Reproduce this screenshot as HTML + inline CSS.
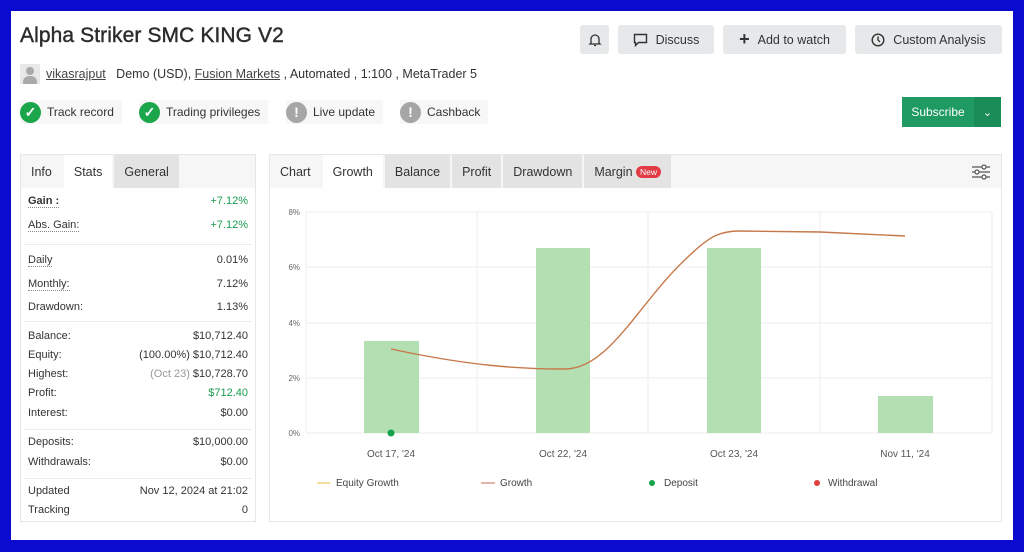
<!DOCTYPE html>
<html><head><meta charset="utf-8"><style>
*{box-sizing:border-box;margin:0;padding:0}
body{width:1024px;height:552px;background:#0b0bd0;font-family:"Liberation Sans",Arial,sans-serif;color:#333;position:relative;overflow:hidden}
.page{position:absolute;left:11px;top:11px;width:1002px;height:529px;background:#fff}
.abs{position:absolute}
h1{position:absolute;left:9px;top:13px;font-size:21px;font-weight:normal;color:#2b2b2b;-webkit-text-stroke:0.4px #2b2b2b;letter-spacing:0.1px;white-space:nowrap}
.meta{position:absolute;left:9px;top:53px;font-size:12.5px;color:#333;display:flex;align-items:center;white-space:nowrap}
.meta u{color:#444}
.av{width:20px;height:20px;background:#e8e8e8;margin-right:6px;position:relative;overflow:hidden}
.badge{position:absolute;top:89px;height:24px;background:#f7f7f7;display:flex;align-items:center;font-size:12px;color:#333;padding-right:8px;white-space:nowrap}
.ic{width:21px;height:21px;border-radius:50%;display:flex;align-items:center;justify-content:center;margin-right:6px;color:#fff;font-weight:bold;font-size:14px;flex:none}
.btn{position:absolute;top:14px;height:29px;background:#e6e8ea;border-radius:3px;display:flex;align-items:center;justify-content:center;font-size:12.5px;color:#333;white-space:nowrap}
.sub{position:absolute;left:891px;top:86px;width:99px;height:30px;background:#1f9a62;color:#fff;font-size:12px;display:flex;align-items:center}
.panel{position:absolute;top:143px;height:368px;border:1px solid #e6e6e6;background:#fff}
.tabs{height:33px;background:#f6f6f6;display:flex;font-size:12.5px;color:#333;white-space:nowrap}
.tabs div{padding:0 10px;display:flex;align-items:center;margin-right:2px}
.tabs .w{background:#fff}.tabs .g{background:#e3e3e3}
.row{position:absolute;left:0;right:0;display:flex;justify-content:space-between;font-size:11px;color:#333;padding:0 7px;height:16px;align-items:center;white-space:nowrap}
.sep{position:absolute;left:3px;right:3px;border-top:1px solid #ececec}
.dot{border-bottom:1px dotted #888}
.gr{color:#1a9c4e}
</style></head><body><div class="page">
<h1>Alpha Striker SMC KING V2</h1>
<div class="meta"><div class="av"><div class="abs" style="left:6px;top:3px;width:8px;height:8px;border-radius:50%;background:#aaa"></div><div class="abs" style="left:3px;top:12px;width:14px;height:10px;border-radius:6px 6px 0 0;background:#aaa"></div></div><u>vikasrajput</u>&nbsp;&nbsp; Demo (USD),&nbsp;<u>Fusion Markets</u>&nbsp;, Automated , 1:100 , MetaTrader 5</div>
<div class="badge" style="left:9px"><div class="ic" style="background:#1ca64c">✓</div>Track record</div>
<div class="badge" style="left:128px"><div class="ic" style="background:#1ca64c">✓</div>Trading privileges</div>
<div class="badge" style="left:275px"><div class="ic" style="background:#a6a6a6">!</div>Live update</div>
<div class="badge" style="left:389px"><div class="ic" style="background:#a6a6a6">!</div>Cashback</div>
<div class="btn" style="left:569px;width:29px"><svg width="14" height="14" viewBox="0 0 14 14" fill="none" stroke="#333" stroke-width="1.3"><path d="M3 10V6a4 4 0 018 0v4l1 1H2z M6 12.5h2"/></svg></div>
<div class="btn" style="left:607px;width:96px"><svg width="15" height="14" viewBox="0 0 15 14" fill="none" stroke="#333" stroke-width="1.4" style="margin-right:8px"><path d="M1.5 1.5h12v8h-8l-3 3v-3h-1z"/></svg>Discuss</div>
<div class="btn" style="left:712px;width:123px"><span style="font-size:18px;margin-right:8px;font-weight:bold">+</span>Add to watch</div>
<div class="btn" style="left:844px;width:147px"><svg width="14" height="14" viewBox="0 0 14 14" fill="none" stroke="#333" stroke-width="1.4" style="margin-right:8px"><circle cx="7" cy="7" r="5.8"/><path d="M7 3.5V7l2 2"/></svg>Custom Analysis</div>
<div class="sub"><span style="width:72px;text-align:center">Subscribe</span><span style="width:27px;height:30px;background:#1a8c58;display:flex;align-items:center;justify-content:center;font-size:11px">&#8964;</span></div>

<div class="panel" style="left:9px;width:236px">
<div class="tabs"><div>Info</div><div class="w">Stats</div><div class="g">General</div></div>
<div class="row" style="top:38px"><b class="dot">Gain :</b><span class="gr">+7.12%</span></div>
<div class="row" style="top:62px"><span class="dot">Abs. Gain:</span><span class="gr">+7.12%</span></div>
<div class="sep" style="top:89px"></div>
<div class="row" style="top:97px"><span class="dot">Daily</span><span>0.01%</span></div>
<div class="row" style="top:121px"><span class="dot">Monthly:</span><span>7.12%</span></div>
<div class="row" style="top:144px"><span>Drawdown:</span><span>1.13%</span></div>
<div class="sep" style="top:166px"></div>
<div class="row" style="top:173px"><span>Balance:</span><span>$10,712.40</span></div>
<div class="row" style="top:192px"><span>Equity:</span><span>(100.00%) $10,712.40</span></div>
<div class="row" style="top:211px"><span>Highest:</span><span><span style="color:#999">(Oct 23)</span> $10,728.70</span></div>
<div class="row" style="top:230px"><span>Profit:</span><span class="gr">$712.40</span></div>
<div class="row" style="top:250px"><span>Interest:</span><span>$0.00</span></div>
<div class="sep" style="top:274px"></div>
<div class="row" style="top:279px"><span>Deposits:</span><span>$10,000.00</span></div>
<div class="row" style="top:299px"><span>Withdrawals:</span><span>$0.00</span></div>
<div class="sep" style="top:323px"></div>
<div class="row" style="top:328px"><span>Updated</span><span>Nov 12, 2024 at 21:02</span></div>
<div class="row" style="top:347px"><span>Tracking</span><span>0</span></div>
</div>

<div class="panel" style="left:258px;width:733px">
<div class="tabs"><div>Chart</div><div class="w">Growth</div><div class="g">Balance</div><div class="g">Profit</div><div class="g">Drawdown</div><div class="g">Margin&nbsp;<span style="background:#e23b46;color:#fff;font-size:8.5px;border-radius:6px;padding:1px 4px">New</span></div></div>
<svg class="abs" style="right:10px;top:8px" width="20" height="18" viewBox="0 0 20 18" fill="none" stroke="#555" stroke-width="1.2"><path d="M1 4h18M1 9h18M1 14h18"/><circle cx="13" cy="4" r="2" fill="#fff"/><circle cx="6" cy="9" r="2" fill="#fff"/><circle cx="13" cy="14" r="2" fill="#fff"/></svg>
</div>
<svg class="abs" style="left:0;top:0" width="1002" height="529" viewBox="11 11 1002 529" font-family="Liberation Sans,Arial,sans-serif">
<g stroke="#ececec" stroke-width="1">
<path d="M306 212H992M306 267H992M306 323H992M306 378H992M306 433H992M306 212V433M477 212V433M648 212V433M820 212V433M992 212V433"/>
</g>
<g fill="#b3dfb3"><rect x="364" y="341" width="55" height="92"/><rect x="536" y="248" width="54" height="185"/><rect x="707" y="248" width="54" height="185"/><rect x="878" y="396" width="55" height="37"/></g>
<path d="M391 349C470 366 520 369 565 369C610 369 640 300 690 255C710 236 720 231 740 231L820 232L905 236" fill="none" stroke="#c7784a" stroke-width="1.4"/>
<circle cx="391" cy="433" r="3.5" fill="#12a34a"/>
<g font-size="8" fill="#666" text-anchor="end"><text x="300" y="215">8%</text><text x="300" y="270">6%</text><text x="300" y="326">4%</text><text x="300" y="381">2%</text><text x="300" y="436">0%</text></g>
<g font-size="10" fill="#555" text-anchor="middle"><text x="391" y="457">Oct 17, '24</text><text x="563" y="457">Oct 22, '24</text><text x="734" y="457">Oct 23, '24</text><text x="905" y="457">Nov 11, '24</text></g>
<g font-size="10" fill="#444"><path d="M317 483h13" stroke="#f2d27a" stroke-width="1.5"/><text x="336" y="486">Equity Growth</text>
<path d="M481 483h14" stroke="#d99a90" stroke-width="1.5"/><text x="500" y="486">Growth</text>
<circle cx="652" cy="483" r="3" fill="#12a34a"/><text x="664" y="486">Deposit</text>
<circle cx="817" cy="483" r="3" fill="#e04040"/><text x="828" y="486">Withdrawal</text></g>
</svg>
</div></body></html>
